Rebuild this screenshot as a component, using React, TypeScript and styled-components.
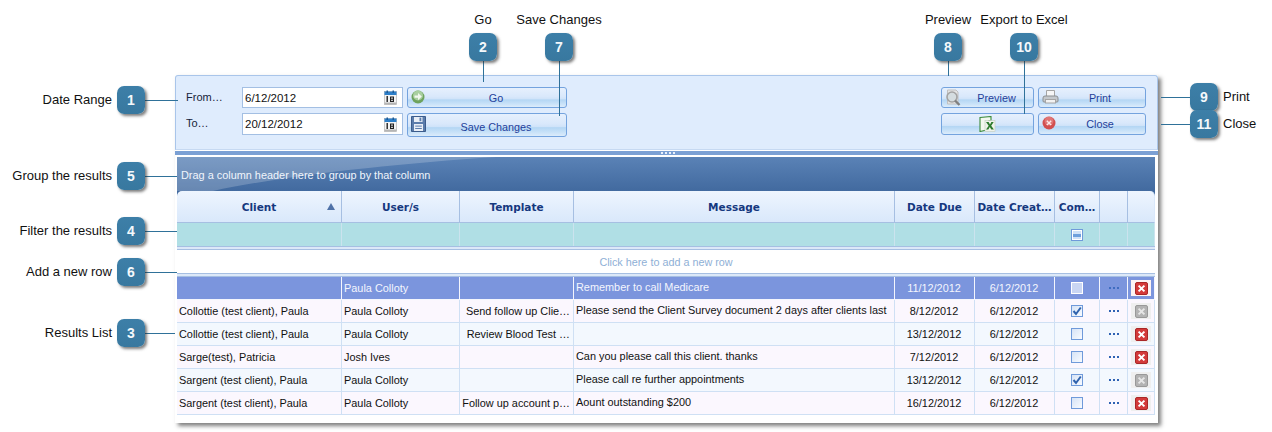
import React from "react";
import styled, { createGlobalStyle } from "styled-components";

const Global = createGlobalStyle`
  html, body { margin: 0; padding: 0; background: #fff; }
  #root { width: 1272px; height: 432px; overflow: hidden; }
  * { box-sizing: border-box; }
`;

const COLS = "165px 118px 114px 321px 80px 80px 45px 28px 27px";
const UI_FONT = `"Liberation Sans", Arial, sans-serif`;
const HEAD_FONT = `"DejaVu Sans", Verdana, sans-serif`;

const Page = styled.div`
  position: relative;
  width: 1272px;
  height: 432px;
  padding: 75px 0 0 175px;
  font-family: ${UI_FONT};
`;

const Win = styled.div`
  width: 983px;
  height: 348px;
  background: #fff;
  box-shadow: 3px 3px 4px rgba(60, 60, 60, 0.65);
  display: flex;
  flex-direction: column;
`;

const TopPanel = styled.div`
  flex: none;
  height: 75px;
  background: #dfecfd;
  border: 1px solid #a9c5ea;
  border-bottom-color: #c6d9f2;
  border-radius: 3px 3px 0 0;
  padding: 11px 11px 0 10px;
  display: flex;
  justify-content: space-between;
`;

const LeftControls = styled.div`
  display: grid;
  grid-template-columns: 56px 161px 164px;
  grid-template-rows: 21px 24px;
  row-gap: 5px;
`;

const RightControls = styled.div`
  display: grid;
  grid-template-columns: 93px 108px;
  grid-template-rows: 21px 22px;
  column-gap: 4px;
  row-gap: 5px;
`;

const FieldLabel = styled.span`
  font-size: 11px;
  line-height: 20px;
  color: #15233a;
`;

const DateField = styled.div<{ $tall?: boolean }>`
  height: ${(p) => (p.$tall ? 22 : 21)}px;
  background: #fff;
  border: 1px solid #a3bfe3;
  display: flex;
  align-items: center;
  justify-content: space-between;
  padding: 0 5px 0 2px;
  font-size: 11.5px;
  color: #111;
`;

const ActionButton = styled.button<{ $offset?: number; $shift?: number; $low?: boolean }>`
  position: relative;
  margin: 0 0 0 ${(p) => p.$offset ?? 0}px;
  padding: ${(p) => (p.$low ? "3px" : "0")} 0 0 ${(p) => p.$shift ?? 0}px;
  border: 1px solid #74a3de;
  border-radius: 3px;
  background: linear-gradient(180deg, #e6f0fd 0%, #d9e8fb 45%, #cfe3f9 58%, #b4d6f4 62%, #c7e1f8 82%, #dcecfb 100%);
  font-family: ${UI_FONT};
  font-size: 10.8px;
  color: #1f3f9a;
  display: flex;
  align-items: center;
  justify-content: center;
`;

const ButtonIcon = styled.span`
  position: absolute;
  left: 3px;
  top: 1px;
  line-height: 0;
`;

const Splitter = styled.div`
  flex: none;
  height: 7px;
  padding-top: 1px;
  background: #fff;
`;

const SplitterBand = styled.div`
  height: 4px;
  background: #7ba0d4;
  display: flex;
  justify-content: center;
  align-items: center;
  &::before {
    content: "";
    width: 14px;
    height: 2px;
    margin-left: 2px;
    background: repeating-linear-gradient(90deg, #e8f0fb 0 2px, transparent 2px 4px);
  }
`;

const GridArea = styled.div`
  flex: 1;
  margin-left: 2px;
  width: 978px;
  display: flex;
  flex-direction: column;
`;

const GroupBar = styled.div`
  position: relative;
  flex: none;
  height: 34px;
  background: linear-gradient(180deg, #5a82b6 0%, #426a9f 100%);
  color: #f0f5fc;
  font-size: 10.9px;
  line-height: 36px;
  padding-left: 4px;
  &::before {
    content: "";
    position: absolute;
    inset: 0;
    background: rgba(255, 255, 255, 0.2);
    clip-path: path("M0 0 L320 0 C210 7 100 20 36 34 L0 34 Z");
  }
`;

const GroupText = styled.span`
  position: relative;
`;

const HeaderRow = styled.div`
  flex: none;
  display: grid;
  grid-template-columns: ${COLS};
  height: 32px;
  background: #426a9f;
`;

const HeaderCell = styled.div<{ $last?: boolean; $first?: boolean }>`
  position: relative;
  background: linear-gradient(180deg, #eef5fe 0%, #d9e8fb 100%);
  border-right: 1px solid ${(p) => (p.$last ? "#d9e8fb" : "#a6bfe2")};
  border-bottom: 1px solid #a6bfe2;
  border-radius: ${(p) => (p.$first ? "5px 0 0 0" : p.$last ? "0 5px 0 0" : "0")};
  color: #15387f;
  font-family: ${HEAD_FONT};
  font-size: 10.5px;
  font-weight: 700;
  display: flex;
  align-items: center;
  justify-content: center;
`;

const SortMark = styled.span`
  position: absolute;
  right: 6px;
  top: 12px;
  width: 0;
  height: 0;
  border-left: 4px solid transparent;
  border-right: 4px solid transparent;
  border-bottom: 7px solid #4f72a8;
`;

const FilterRow = styled.div`
  flex: none;
  display: grid;
  grid-template-columns: ${COLS};
  height: 23px;
  background: #b0dfe5;
`;

const FilterCell = styled.div`
  border-right: 1px solid #cbe3ee;
  display: flex;
  align-items: center;
  justify-content: center;
`;

const Rule = styled.div`
  flex: none;
  height: 4px;
  border-top: 1px solid #a6bfe2;
  border-bottom: 1px solid #a6bfe2;
  background: #dce8f8;
`;

const AddRow = styled.div`
  flex: none;
  height: 23px;
  background: #fff;
  color: #8fb0d6;
  font-size: 10.8px;
  line-height: 24px;
  text-align: center;
`;

const DataRow = styled.div<{ $selected?: boolean; $alt?: boolean }>`
  flex: none;
  display: grid;
  grid-template-columns: ${COLS};
  height: 23px;
  background: ${(p) => (p.$selected ? "#7b95dd" : p.$alt ? "#f3f8fe" : "#fbf7fe")};
  color: ${(p) => (p.$selected ? "#f4f6fd" : "#111")};
  border-bottom: 1px solid ${(p) => (p.$selected ? "#f4f6fd" : "#cfe0f4")};
`;

const Cell = styled.div<{ $align?: string; $raise?: boolean; $selected?: boolean }>`
  border-right: 1px solid ${(p) => (p.$selected ? "#f4f6fd" : "#cfe0f4")};
  font-size: 10.9px;
  line-height: ${(p) => (p.$raise ? "20px" : "23px")};
  padding: 0 3px 0 2px;
  text-align: ${(p) => p.$align ?? "left"};
  white-space: nowrap;
  overflow: hidden;
`;

const IconCell = styled.div<{ $selected?: boolean }>`
  border-right: 1px solid ${(p) => (p.$selected ? "#f4f6fd" : "#cfe0f4")};
  display: flex;
  align-items: center;
  justify-content: center;
`;

const Dots = styled.span<{ $selected?: boolean }>`
  display: block;
  width: 10px;
  height: 2px;
  background: repeating-linear-gradient(90deg, ${(p) => (p.$selected ? "#3f6cc0" : "#2f62b3")} 0 2px, transparent 2px 4px);
`;

const Tick = styled.span<{ $filled?: boolean; $selected?: boolean }>`
  display: block;
  width: 12px;
  height: 12px;
  border: 1px solid ${(p) => (p.$selected ? "#fff" : "#6f9ada")};
  background: ${(p) =>
    p.$filled
      ? "linear-gradient(180deg,#cfe2f8 0 40%,#6ea0dc 40% 75%,#cfe2f8 75%)"
      : p.$selected
      ? "#c9d6f3"
      : "linear-gradient(135deg,#d6e3f6,#f8fbff)"};
  line-height: 0;
  box-shadow: inset 0 0 0 1px ${(p) => (p.$filled ? "#fff" : "transparent")};
`;

const DeleteWrap = styled.span<{ $selected?: boolean }>`
  width: 20px;
  height: 16px;
  background: ${(p) => (p.$selected ? "#fdf4f4" : "#efefef")};
  display: flex;
  align-items: center;
  justify-content: center;
  line-height: 0;
`;

/* ---- annotation layer ---- */
const Badge = styled.div<{ $x: number; $y: number }>`
  position: absolute;
  left: ${(p) => p.$x}px;
  top: ${(p) => p.$y}px;
  width: 28px;
  height: 28px;
  border-radius: 7px;
  background: linear-gradient(180deg, #3d7fa8 0%, #38789f 100%);
  box-shadow: 2px 2px 3px rgba(40, 40, 40, 0.6);
  color: #f4f8fb;
  font-family: "Liberation Sans", Arial, sans-serif;
  font-size: 14px;
  font-weight: 700;
  display: flex;
  align-items: center;
  justify-content: center;
  z-index: 3;
`;

const Leader = styled.div<{ $x: number; $y: number; $w: number; $h: number }>`
  position: absolute;
  left: ${(p) => p.$x}px;
  top: ${(p) => p.$y}px;
  width: ${(p) => p.$w}px;
  height: ${(p) => p.$h}px;
  background: #2f7199;
  z-index: 2;
`;

const Caption = styled.div<{ $x: number; $y: number; $anchor: "left" | "right" | "center" }>`
  position: absolute;
  top: ${(p) => p.$y - 8}px;
  left: ${(p) => p.$x}px;
  transform: ${(p) =>
    p.$anchor === "right" ? "translateX(-100%)" : p.$anchor === "center" ? "translateX(-50%)" : "none"};
  font-family: "Liberation Sans", Arial, sans-serif;
  font-size: 13px;
  line-height: 16px;
  color: #111;
  white-space: nowrap;
`;

/* ---- drawn icons ---- */
const CalendarIcon = () => (
  <svg width="13" height="15" viewBox="0 0 13 15">
    <rect x="0.5" y="1.5" width="12" height="13" fill="#f4f4f4" stroke="#a8a8a8" strokeWidth="0.6" />
    <rect x="0.5" y="1.5" width="12" height="3.5" fill="#2d7fc9" />
    <rect x="2.5" y="0.5" width="1.5" height="2.5" fill="#1b5b99" />
    <rect x="8.5" y="0.5" width="1.5" height="2.5" fill="#1b5b99" />
    <rect x="0.5" y="12.5" width="12" height="2" fill="#b5b5b5" />
    <rect x="2.5" y="6" width="1.4" height="6" fill="#222" />
    <path d="M6 6.5h4v5.5H6z M7.2 7.6v1.1h1.6V7.6z M7.2 9.8v1.1h1.6V9.8z" fill="#222" fillRule="evenodd" />
  </svg>
);

const GoIcon = () => (
  <svg width="14" height="16" viewBox="0 0 14 16">
    <circle cx="7" cy="8" r="6.5" fill="#6ea35e" />
    <circle cx="7" cy="6.5" r="5" fill="#a9cfa0" />
    <path d="M3.5 6.5h3.5V4l3.8 3.6L7 11.2V8.8H3.5z" fill="#f2f8ee" />
  </svg>
);

const SaveIcon = () => (
  <svg width="15" height="17" viewBox="0 0 15 17">
    <path d="M0.5 1.5h14v15h-14z" fill="#5b7cab" stroke="#3c5c8c" />
    <rect x="3" y="2" width="8.5" height="5" fill="#e9eef6" />
    <rect x="8.5" y="2.6" width="1.8" height="3.6" fill="#5b7cab" />
    <rect x="3" y="9" width="9" height="7" fill="#e9eef6" />
    <rect x="4.2" y="10.6" width="6.6" height="1" fill="#5b7cab" />
    <rect x="4.2" y="13" width="6.6" height="1" fill="#5b7cab" />
  </svg>
);

const PreviewIcon = () => (
  <svg width="16" height="18" viewBox="0 0 16 18">
    <path d="M2.5 1h8.5l2 2v12H2.5z" fill="#e4e4e4" stroke="#c0c0c0" />
    <circle cx="7" cy="8" r="5" fill="#d5dde0" stroke="#a3a3a3" strokeWidth="1.6" />
    <path d="M10 11.5l4.5 4.5" stroke="#808080" strokeWidth="2.4" />
  </svg>
);

const PrintIcon = () => (
  <svg width="17" height="16" viewBox="0 0 17 16">
    <path d="M4.5 1.5h8v6h-8z" fill="#f6f6f6" stroke="#a5a5a5" />
    <path d="M1 9q0-2 2-2h11q2 0 2 2v3q0 1-1 1H2q-1 0-1-1z" fill="#c4c8cc" stroke="#8b8f92" />
    <rect x="3.5" y="10.5" width="10" height="3.5" fill="#f2f2f2" stroke="#a5a5a5" />
  </svg>
);

const ExcelIcon = () => (
  <svg width="17" height="16" viewBox="0 0 17 16">
    <path d="M1 1.5l11-1v4h-2v9l-9 2z" fill="#f3f8ee" stroke="#3b8a3a" strokeWidth="1.1" />
    <rect x="6" y="4.5" width="10" height="11" fill="#eef2ea" stroke="#c2ccbe" strokeWidth="0.6" />
    <path d="M7 6h2.6l1.4 2.4L12.4 6h2.3l-2.5 3.7 2.7 3.9h-2.6l-1.5-2.5-1.5 2.5H7l2.7-3.9z" fill="#2c7a2c" />
  </svg>
);

const CloseIcon = () => (
  <svg width="14" height="16" viewBox="0 0 14 16">
    <circle cx="7" cy="8" r="6.5" fill="#d24f4f" />
    <circle cx="7" cy="6" r="4.5" fill="#ee9b9b" opacity="0.5" />
    <path d="M4.3 5.2l1-1L7 5.9l1.7-1.7 1 1L8 6.9l1.7 1.7-1 1L7 7.9 5.3 9.6l-1-1L6 6.9z" transform="translate(0 1)" fill="#fbe9e9" />
  </svg>
);

const CheckMark = () => (
  <svg width="10" height="10" viewBox="0 0 10 10">
    <path d="M1.5 5l2.5 3L8.8 1.5" fill="none" stroke="#2f62ad" strokeWidth="2" />
  </svg>
);

const DeleteIcon = ({ off }: { off?: boolean }) => (
  <svg width="13" height="13" viewBox="0 0 13 13">
    <rect x="0.5" y="0.5" width="12" height="12" rx="1.5" fill={off ? "#b3b3b3" : "#d33a3a"} stroke={off ? "#999" : "#a92727"} />
    <path d="M3.6 3.6l5.8 5.8M9.4 3.6l-5.8 5.8" stroke={off ? "#e6e6e6" : "#fff"} strokeWidth="2" />
  </svg>
);

/* ---- data ---- */
const columns = ["Client", "User/s", "Template", "Message", "Date Due", "Date Creat…", "Com…", "", ""];

const rows = [
  { client: "", user: "Paula Colloty", tpl: "", msg: "Remember to call Medicare", due: "11/12/2012", done: false, locked: false },
  { client: "Collottie (test client), Paula", user: "Paula Colloty", tpl: "Send follow up Clie…", msg: "Please send the Client Survey document 2 days after clients last", due: "8/12/2012", done: true, locked: true },
  { client: "Collottie (test client), Paula", user: "Paula Colloty", tpl: "Review Blood Test …", msg: "", due: "13/12/2012", done: false, locked: false },
  { client: "Sarge(test), Patricia", user: "Josh Ives", tpl: "", msg: "Can you please call this client. thanks", due: "7/12/2012", done: false, locked: false },
  { client: "Sargent (test client), Paula", user: "Paula Colloty", tpl: "", msg: "Please call re further appointments", due: "13/12/2012", done: true, locked: true },
  { client: "Sargent (test client), Paula", user: "Paula Colloty", tpl: "Follow up account p…", msg: "Aount outstanding $200", due: "16/12/2012", done: false, locked: false },
];

type Note = {
  n: number;
  x: number;
  y: number;
  text: string;
  tx: number;
  ty: number;
  anchor: "left" | "right" | "center";
  line: [number, number, number, number];
};

const notes: Note[] = [
  { n: 1, x: 117, y: 86, text: "Date Range", tx: 112, ty: 100, anchor: "right", line: [145, 100, 33, 1] },
  { n: 2, x: 469, y: 33, text: "Go", tx: 483, ty: 20, anchor: "center", line: [483, 61, 1, 21] },
  { n: 7, x: 545, y: 33, text: "Save Changes", tx: 559, ty: 20, anchor: "center", line: [559, 61, 1, 55] },
  { n: 8, x: 934, y: 33, text: "Preview", tx: 948, ty: 20, anchor: "center", line: [948, 61, 1, 15] },
  { n: 10, x: 1010, y: 33, text: "Export to Excel", tx: 1024, ty: 20, anchor: "center", line: [1024, 61, 1, 53] },
  { n: 9, x: 1190, y: 83, text: "Print", tx: 1223, ty: 97, anchor: "left", line: [1161, 97, 29, 1] },
  { n: 11, x: 1190, y: 110, text: "Close", tx: 1223, ty: 124, anchor: "left", line: [1161, 124, 29, 1] },
  { n: 5, x: 117, y: 162, text: "Group the results", tx: 112, ty: 176, anchor: "right", line: [145, 176, 32, 1] },
  { n: 4, x: 117, y: 217, text: "Filter the results", tx: 112, ty: 231, anchor: "right", line: [145, 231, 32, 1] },
  { n: 6, x: 117, y: 258, text: "Add a new row", tx: 112, ty: 272, anchor: "right", line: [145, 272, 32, 1] },
  { n: 3, x: 117, y: 319, text: "Results List", tx: 112, ty: 333, anchor: "right", line: [145, 333, 30, 1] },
];

export default function App() {
  return (
    <Page>
      <Global />
      <Win>
        <TopPanel>
          <LeftControls>
            <FieldLabel>From…</FieldLabel>
            <DateField>
              6/12/2012
              <CalendarIcon />
            </DateField>
            <ActionButton $offset={4} $shift={18}>
              <ButtonIcon><GoIcon /></ButtonIcon>
              Go
            </ActionButton>
            <FieldLabel>To…</FieldLabel>
            <DateField $tall>
              20/12/2012
              <CalendarIcon />
            </DateField>
            <ActionButton $offset={4} $shift={18} $low>
              <ButtonIcon><SaveIcon /></ButtonIcon>
              Save Changes
            </ActionButton>
          </LeftControls>
          <RightControls>
            <ActionButton $shift={18}>
              <ButtonIcon><PreviewIcon /></ButtonIcon>
              Preview
            </ActionButton>
            <ActionButton $shift={16}>
              <ButtonIcon><PrintIcon /></ButtonIcon>
              Print
            </ActionButton>
            <ActionButton>
              <ExcelIcon />
            </ActionButton>
            <ActionButton $shift={16}>
              <ButtonIcon><CloseIcon /></ButtonIcon>
              Close
            </ActionButton>
          </RightControls>
        </TopPanel>
        <Splitter><SplitterBand /></Splitter>
        <GridArea>
          <GroupBar>
            <GroupText>Drag a column header here to group by that column</GroupText>
          </GroupBar>
          <HeaderRow>
            {columns.map((c, i) => (
              <HeaderCell key={i} $first={i === 0} $last={i === columns.length - 1}>
                {c}
                {i === 0 && <SortMark />}
              </HeaderCell>
            ))}
          </HeaderRow>
          <FilterRow>
            {columns.map((_, i) => (
              <FilterCell key={i}>{i === 6 && <Tick $filled />}</FilterCell>
            ))}
          </FilterRow>
          <Rule />
          <AddRow>Click here to add a new row</AddRow>
          <Rule />
          {rows.map((r, i) => {
            const sel = i === 0;
            return (
              <DataRow key={i} $selected={sel} $alt={i % 2 === 0}>
                <Cell $selected={sel}>{r.client}</Cell>
                <Cell $selected={sel}>{r.user}</Cell>
                <Cell $selected={sel} $align="right">{r.tpl}</Cell>
                <Cell $selected={sel} $raise>{r.msg}</Cell>
                <Cell $selected={sel} $align="center">{r.due}</Cell>
                <Cell $selected={sel} $align="center">6/12/2012</Cell>
                <IconCell $selected={sel}>
                  <Tick $selected={sel}>{r.done && <CheckMark />}</Tick>
                </IconCell>
                <IconCell $selected={sel}><Dots $selected={sel} /></IconCell>
                <IconCell $selected={sel}>
                  <DeleteWrap $selected={sel}><DeleteIcon off={r.locked} /></DeleteWrap>
                </IconCell>
              </DataRow>
            );
          })}
        </GridArea>
      </Win>
      {notes.map((a) => (
        <React.Fragment key={a.n}>
          <Leader $x={a.line[0]} $y={a.line[1]} $w={a.line[2]} $h={a.line[3]} />
          <Badge $x={a.x} $y={a.y}>{a.n}</Badge>
          <Caption $x={a.tx} $y={a.ty} $anchor={a.anchor}>{a.text}</Caption>
        </React.Fragment>
      ))}
    </Page>
  );
}
